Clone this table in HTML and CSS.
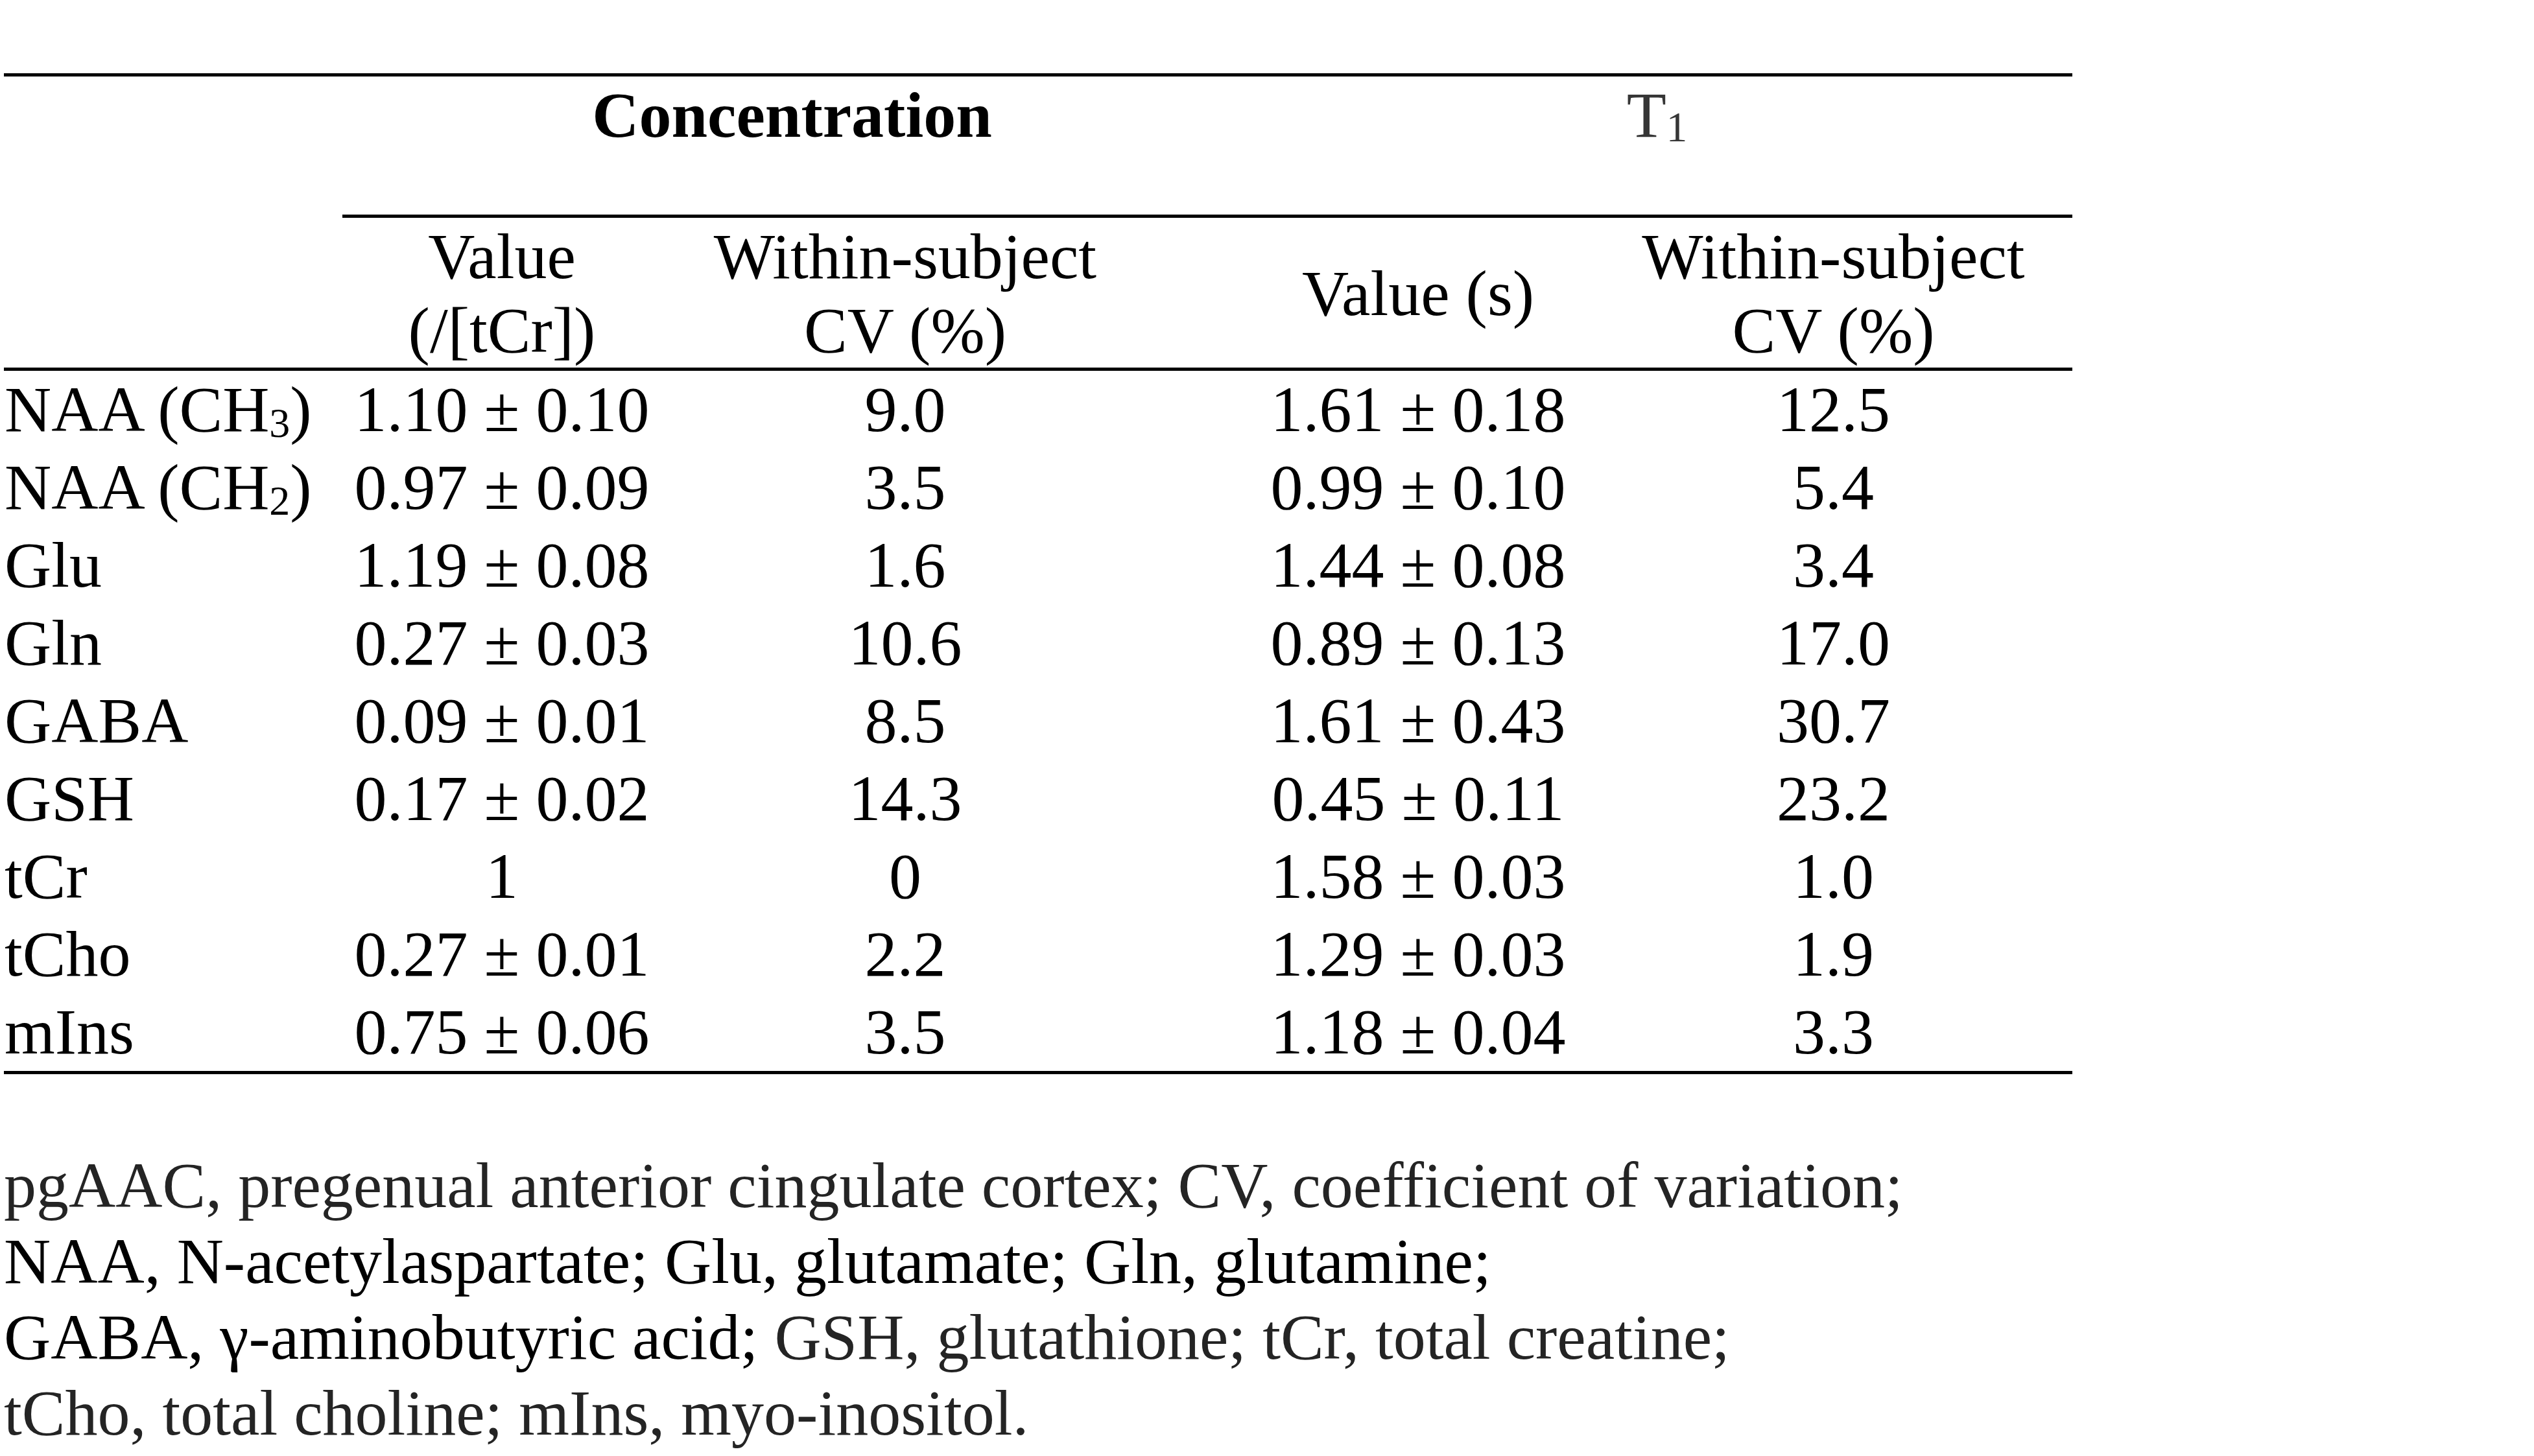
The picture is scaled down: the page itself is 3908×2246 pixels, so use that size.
FILE: index.html
```html
<!DOCTYPE html>
<html lang="en">
<head>
<meta charset="utf-8">
<title>pgACC metabolite concentrations and T1</title>
<link rel="stylesheet" href="styles.css">
</head>
<body>
<div class="page">
  <table class="tbl">
    <colgroup>
      <col class="c-stub">
      <col class="c-val">
      <col class="c-cv">
      <col class="c-gap">
      <col class="c-t1">
      <col class="c-cv2">
    </colgroup>
    <thead>
      <tr class="h1">
        <th class="stub" rowspan="2"></th>
        <th class="grp conc" colspan="3">Concentration</th>
        <th class="grp t1" colspan="2">T<sub class="tsub">1</sub></th>
      </tr>
      <tr class="h2">
        <th>Value<br>(/[tCr])</th>
        <th>Within-subject<br>CV (%)</th>
        <th></th>
        <th class="mid">Value (s)</th>
        <th>Within-subject<br>CV (%)</th>
      </tr>
    </thead>
    <tbody>
      <tr><td class="name">NAA (CH<sub class="chem">3</sub>)</td><td>1.10 ± 0.10</td><td>9.0</td><td></td><td>1.61 ± 0.18</td><td>12.5</td></tr>
      <tr><td class="name">NAA (CH<sub class="chem">2</sub>)</td><td>0.97 ± 0.09</td><td>3.5</td><td></td><td>0.99 ± 0.10</td><td>5.4</td></tr>
      <tr><td class="name">Glu</td><td>1.19 ± 0.08</td><td>1.6</td><td></td><td>1.44 ± 0.08</td><td>3.4</td></tr>
      <tr><td class="name">Gln</td><td>0.27 ± 0.03</td><td>10.6</td><td></td><td>0.89 ± 0.13</td><td>17.0</td></tr>
      <tr><td class="name">GABA</td><td>0.09 ± 0.01</td><td>8.5</td><td></td><td>1.61 ± 0.43</td><td>30.7</td></tr>
      <tr><td class="name">GSH</td><td>0.17 ± 0.02</td><td>14.3</td><td></td><td>0.45 ± 0.11</td><td>23.2</td></tr>
      <tr><td class="name">tCr</td><td>1</td><td>0</td><td></td><td>1.58 ± 0.03</td><td>1.0</td></tr>
      <tr><td class="name">tCho</td><td>0.27 ± 0.01</td><td>2.2</td><td></td><td>1.29 ± 0.03</td><td>1.9</td></tr>
      <tr class="last"><td class="name">mIns</td><td>0.75 ± 0.06</td><td>3.5</td><td></td><td>1.18 ± 0.04</td><td>3.3</td></tr>
    </tbody>
  </table>

  <p class="notes">
    <span class="gray">pgAAC, pregenual anterior cingulate cortex; CV, coefficient of variation;</span><br>
    <span class="black">NAA, N-acetylaspartate; Glu, glutamate; Gln, glutamine;</span><br>
    <span class="black">GABA, γ-aminobutyric acid;</span> <span class="gray">GSH, glutathione; tCr, total creatine;</span><br>
    <span class="gray">tCho, total choline; mIns, myo-inositol.</span>
  </p>
</div>
</body>
</html>
```

FILE: styles.css
```css
html, body {
  margin: 0;
  padding: 0;
  background: #ffffff;
}

body {
  font-family: "Liberation Serif", "Times New Roman", serif;
  font-size: 100px;
  color: #000000;
}

.page {
  padding: 113px 0 0 6px;
}

.tbl {
  table-layout: fixed;
  width: 3190px;
  border-collapse: separate;
  border-spacing: 0;
}

.c-stub { width: 522px; }
.c-val  { width: 492px; }
.c-cv   { width: 752px; }
.c-gap  { width: 143px; }
.c-t1   { width: 544px; }
.c-cv2  { width: 737px; }

.tbl th,
.tbl td {
  padding: 0;
  font-weight: normal;
  text-align: center;
  white-space: nowrap;
}

/* header row 1 */
.h1 th {
  border-top: 5px solid #000;
  vertical-align: top;
  line-height: 119.5px;
  padding-bottom: 93.5px;
}

.h1 .stub {
  border-bottom: 5px solid #000;
  padding-bottom: 0;
}

.h1 .grp {
  border-bottom: 5px solid #000;
}

.h1 .conc {
  font-weight: bold;
}

.h1 .t1 {
  color: #363636;
}

.tsub {
  font-size: 0.65em;
  vertical-align: -7px;
  line-height: 0;
}

/* header row 2 */
.h2 th {
  border-bottom: 5px solid #000;
  vertical-align: top;
  line-height: 114px;
  padding-top: 3px;
}

.h2 th.mid {
  vertical-align: middle;
}

/* body rows */
.tbl td {
  line-height: 120px;
  vertical-align: top;
}

.tbl td.name {
  text-align: left;
  padding-left: 1px;
}

.chem {
  font-size: 0.64em;
  vertical-align: -9px;
  line-height: 0;
}

.last td {
  border-bottom: 5px solid #000;
}

/* footnote */
.notes {
  margin: 113px 0 0 0;
  line-height: 117px;
  white-space: nowrap;
}

.notes .gray {
  color: #242424;
}

.notes .black {
  color: #000000;
}
```
